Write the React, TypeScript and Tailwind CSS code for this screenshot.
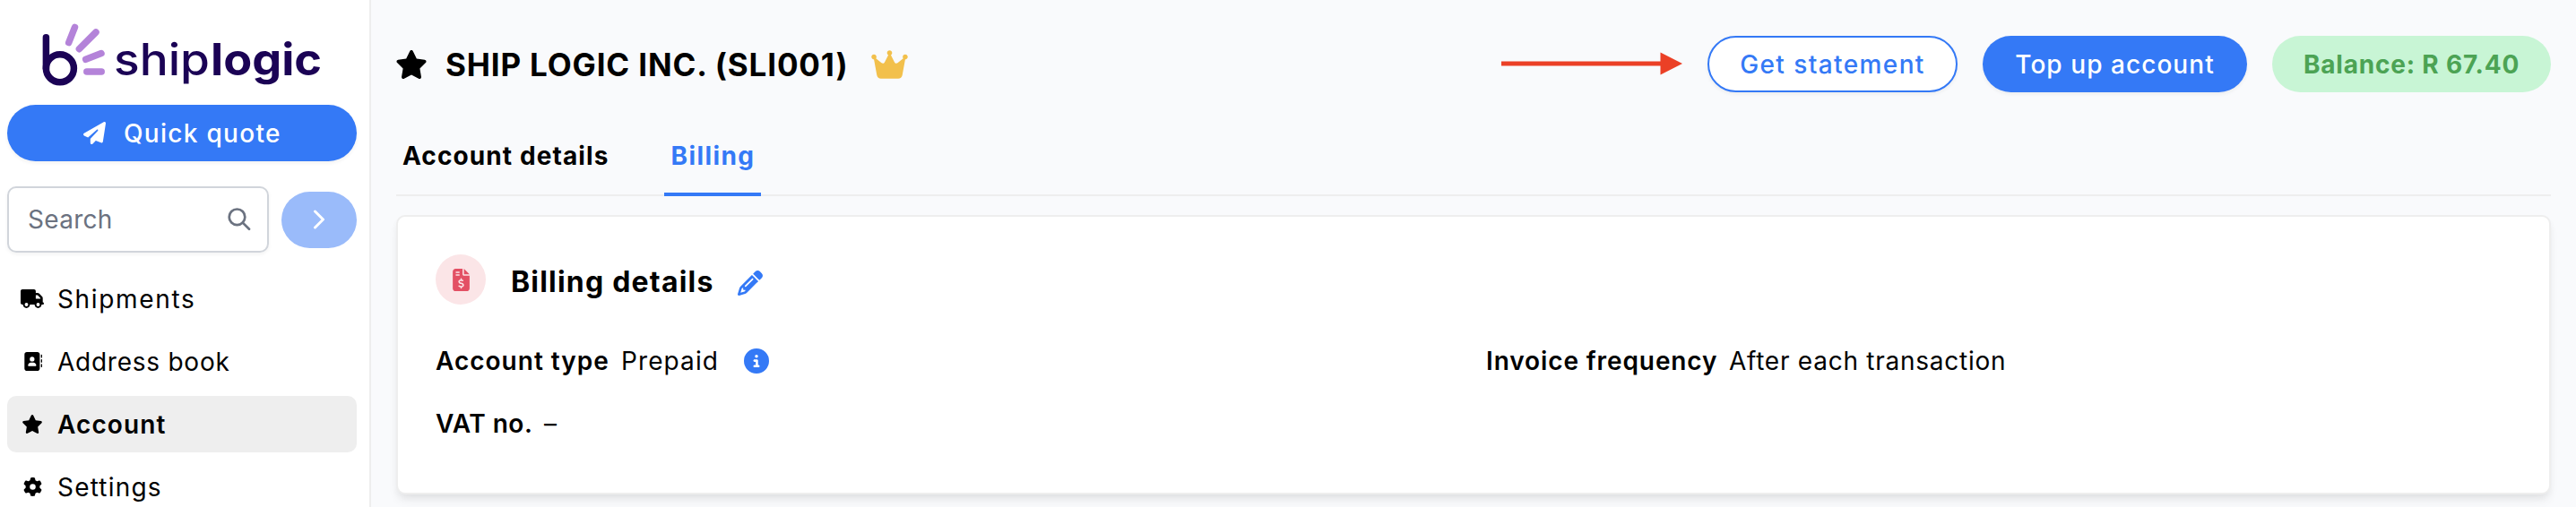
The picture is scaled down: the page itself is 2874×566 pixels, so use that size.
import type { ReactNode } from "react";
import clsx from "clsx";
import type { IconType } from "react-icons";
import {
  FaAddressBook,
  FaCircleInfo,
  FaCrown,
  FaFileInvoiceDollar,
  FaGear,
  FaPaperPlane,
  FaPencil,
  FaStar,
  FaTruck,
} from "react-icons/fa6";

interface NavItem {
  label: string;
  icon: IconType;
  iconClass: string;
  textClass: string;
  active?: boolean;
}

const navItems: NavItem[] = [
  { label: "Shipments", icon: FaTruck, iconClass: "w-[26px]", textClass: "tracking-[1.65px]" },
  { label: "Address book", icon: FaAddressBook, iconClass: "ml-px w-[21px]", textClass: "tracking-[0.75px]" },
  { label: "Account", icon: FaStar, iconClass: "w-[24px]", textClass: "tracking-[1.1px]", active: true },
  { label: "Settings", icon: FaGear, iconClass: "ml-px w-[21px]", textClass: "tracking-[1.2px]" },
];

function Logo() {
  return (
    <svg width="390" height="117" viewBox="8 0 390 117" className="block font-['Inter',sans-serif]">
      <g fill="none" strokeLinecap="round" strokeWidth="7.5">
        <g stroke="#1b0355">
          <path d="M51.4 41.8V76.3" />
          <circle cx="66.9" cy="76.3" r="15.5" />
        </g>
        <g stroke="#b483d9">
          <path d="M83.5 30.4L76.7 47.6" />
          <path d="M107 36L88.4 54.7" />
          <path d="M113 59.6L95.7 66.3" />
          <path d="M113.2 80H96.8" />
        </g>
      </g>
      <g fill="#1b0355" fontSize="49">
        <text x="127" y="83.5" fontWeight="500" textLength="107" lengthAdjust="spacingAndGlyphs">
          ship
        </text>
        <text x="235" y="83.5" fontWeight="700" textLength="124" lengthAdjust="spacingAndGlyphs">
          logic
        </text>
      </g>
    </svg>
  );
}

function Sidebar() {
  return (
    <aside className="w-[414px] shrink-0 border-r-2 border-[#eeeeee] bg-white pr-[14px] pl-2">
      <Logo />

      <button className="flex h-[63px] w-full items-center rounded-[32px] bg-[#3479f6] pl-[85px] font-medium text-white shadow-[0_2px_4px_rgba(0,0,0,0.06)]">
        <FaPaperPlane className="size-[25px]" />
        <span className="ml-[20px] tracking-[1.3px]">Quick quote</span>
      </button>

      <div className="mt-7 flex items-center justify-between">
        <div className="flex h-[74px] w-[292px] items-center justify-between rounded-[10px] border-2 border-[#d1d5db] pr-[18px] pl-[21px] text-[#6b7280] shadow-[0_2px_4px_rgba(0,0,0,0.05)]">
          <span className="tracking-[0.3px]">Search</span>
          <svg width="26" height="26" viewBox="0 0 26 26" fill="none" stroke="currentColor" strokeWidth="2.7">
            <circle cx="10.5" cy="10.3" r="8.8" />
            <path d="M16.8 16.6L24 23.8" strokeLinecap="round" />
          </svg>
        </div>
        <button className="flex h-[63px] w-[84px] items-center justify-center rounded-[32px] bg-[#9abbfa] text-white">
          <svg width="14" height="22" viewBox="0 0 14 22" fill="none" stroke="currentColor" strokeWidth="3">
            <path d="M2.500 2L11.500 11L2.500 20" strokeLinecap="round" strokeLinejoin="round" />
          </svg>
        </button>
      </div>

      <nav className="mt-5 flex flex-col gap-[7px]">
        {navItems.map(({ label, icon: Icon, iconClass, textClass, active }) => (
          <a
            key={label}
            className={clsx(
              "flex h-[63px] items-center rounded-[10px] pl-2",
              active ? "bg-[#eeeeee] font-semibold" : "font-normal"
            )}
          >
            <span className="flex w-10 justify-center">
              <Icon className={clsx("h-[21px]", iconClass)} />
            </span>
            <span className={clsx("ml-[8px]", textClass)}>{label}</span>
          </a>
        ))}
      </nav>
    </aside>
  );
}

function Field({ label, labelClass, children }: { label: string; labelClass: string; children: ReactNode }) {
  return (
    <div className="flex h-[70px] items-center">
      <span className={clsx("shrink-0 font-semibold", labelClass)}>{label}</span>
      {children}
    </div>
  );
}

export default function App() {
  return (
    <div className="flex h-[566px] w-[2874px] overflow-hidden bg-[#f9fafc] font-['Inter',sans-serif] text-[28px] leading-[40px] whitespace-nowrap text-black">
      <Sidebar />

      <main className="flex-1 px-7 pt-10">
        <header className="flex h-[63px] items-center">
          <FaStar className="-ml-px h-[32px] w-[36px]" />
          <h1 className="ml-[20px] w-[451px] text-[35px] font-bold tracking-[0.85px]">SHIP LOGIC INC. (SLI001)</h1>
          <FaCrown className="ml-[24px] h-[36px] w-[41px] text-[#f2c04c]" />

          <div className="ml-auto flex items-center gap-7">
            <svg width="202" height="26" viewBox="0 0 202 26" fill="#eb4026" className="mb-[2px]">
              <path d="M0 10.500H177.500V0.500L202 13L177.500 25.500V15.500H0Z" />
            </svg>
            <button className="h-[63px] w-[279px] rounded-[32px] border-2 border-[#3479f6] bg-white font-medium tracking-[1.4px] text-[#3479f6] shadow-[0_2px_4px_rgba(0,0,0,0.06)]">
              Get statement
            </button>
            <button className="h-[63px] w-[295px] rounded-[32px] bg-[#3479f6] font-medium tracking-[1.05px] text-white shadow-[0_2px_4px_rgba(0,0,0,0.06)]">
              Top up account
            </button>
            <div className="flex h-[63px] w-[311px] items-center justify-center rounded-[32px] bg-[#c8f5d5] font-bold tracking-[0.8px] text-[#4ca354]">
              Balance: R 67.40
            </div>
          </div>
        </header>

        <div className="mt-[26px] flex h-[90px] gap-[55px] border-b-2 border-[#eeeeee] font-bold">
          <div className="flex h-[90px] w-[244px] items-center pl-[7px] tracking-[1.1px]">Account details</div>
          <div className="flex h-[90px] w-[108px] items-center justify-center border-b-4 border-[#3479f6] pt-[3px] pl-px tracking-[1.4px] text-[#3479f6]">
            Billing
          </div>
        </div>

        <section className="mt-[21px] h-[312px] rounded-[10px] border-2 border-[#eeeeee] bg-white px-[42px] pt-[42px] shadow-[0_8px_12px_-2px_rgba(0,0,0,0.07),0_4px_8px_-2px_rgba(0,0,0,0.05)]">
          <div className="flex h-[56px] items-center">
            <span className="flex size-[56px] items-center justify-center rounded-full bg-[#fbe5e7] text-[#e35064]">
              <FaFileInvoiceDollar className="h-[25px] w-[19px]" />
            </span>
            <h2 className="mt-[5px] ml-[28px] w-[227px] text-[32px] font-bold tracking-[1.2px]">Billing details</h2>
            <FaPencil className="mt-[8px] ml-[26px] size-[28px] text-[#3479f6]" />
          </div>

          <div className="mt-[28px] grid grid-cols-2 gap-x-7">
            <Field label="Account type" labelClass="w-[207px] tracking-[1px]">
              <span className="w-[137px] tracking-[1.1px]">Prepaid</span>
              <FaCircleInfo className="size-[28px] text-[#3479f6]" />
            </Field>
            <Field label="Invoice frequency" labelClass="w-[271px] tracking-[0.9px]">
              <span className="tracking-[0.75px]">After each transaction</span>
            </Field>
            <Field label="VAT no." labelClass="w-[121px] tracking-[0.5px]">
              <span>–</span>
            </Field>
          </div>
        </section>
      </main>
    </div>
  );
}
